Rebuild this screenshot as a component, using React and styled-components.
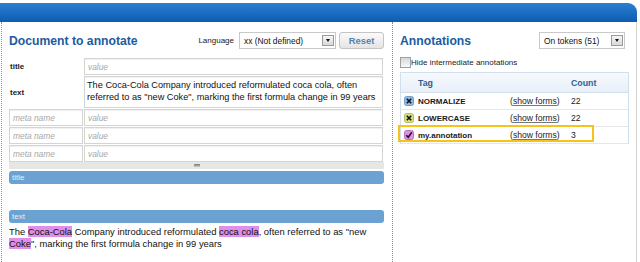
import React from "react";
import styled, { createGlobalStyle } from "styled-components";

const GlobalStyle = createGlobalStyle`
    html, body {
        margin: 0;
        padding: 0;
        background: #fff;
    }
    body {
        font-family: "Liberation Sans", Arial, sans-serif;
        color: #111;
    }
`;

const Page = styled.div`
    width: 637px;
    height: 262px;
    padding-top: 3px;
    box-sizing: border-box;
    overflow: hidden;
`;

const TopBar = styled.div`
    height: 19px;
    border-top-right-radius: 9px;
    background: linear-gradient(#2c7fd1, #0d5db3);
`;

const Body = styled.div`
    display: flex;
    height: 240px;
    margin-left: 1px;
    border-left: 1px dotted #8c8c8c;
    border-right: 1px solid #d3d3d3;
`;

const LeftCol = styled.div`
    box-sizing: border-box;
    width: 391px;
    padding: 9px 8px 0 7px;
    border-right: 1px dotted #8c8c8c;
`;

const RightCol = styled.div`
    flex: 1;
    padding: 9px 7px 0 7px;
`;

const HeaderRow = styled.div`
    display: flex;
    align-items: center;
    height: 19px;
`;

const Heading = styled.h2`
    margin: 0;
    flex: 1;
    font-size: 12.2px;
    font-weight: bold;
    color: #1d5b9f;
`;

const SmallLabel = styled.span`
    font-size: 8px;
    color: #222;
    margin-right: 5px;
`;

const SelectBox = styled.div`
    box-sizing: border-box;
    display: flex;
    align-items: center;
    justify-content: space-between;
    width: ${({w}) => w}px;
    height: 17px;
    padding: 0 1px 0 4px;
    border: 1px solid #c9c9c9;
    background: #fff;
    font-size: 8.4px;
    color: #111;
`;

const SelectArrow = styled.span`
    box-sizing: border-box;
    width: 12px;
    height: 11px;
    border: 1px solid #9a9a9a;
    background: linear-gradient(#f6f6f6, #d9d9d9);
    display: flex;
    align-items: center;
    justify-content: center;
    &::after {
        content: "";
        border-left: 2.5px solid transparent;
        border-right: 2.5px solid transparent;
        border-top: 3px solid #111;
    }
`;

const ResetButton = styled.button`
    box-sizing: border-box;
    width: 45px;
    height: 17px;
    margin-left: 3px;
    padding: 0;
    border: 1px solid #c4c4c4;
    border-radius: 3px;
    background: linear-gradient(#fbfbfb, #e4e4e4);
    font-family: "Liberation Sans", Arial, sans-serif;
    font-size: 9.4px;
    font-weight: bold;
    color: #5581b2;
`;

const FormGrid = styled.div`
    display: grid;
    grid-template-columns: 74px 299px;
    column-gap: 1px;
    row-gap: 1px;
    margin-top: 8px;
`;

const FieldLabel = styled.div`
    display: flex;
    align-items: center;
    padding-left: 1px;
    font-size: 8px;
    font-weight: bold;
    color: #222;
`;

const Field = styled.div`
    box-sizing: border-box;
    height: ${({tall}) => (tall ? 32 : 17)}px;
    padding: ${({tall}) => (tall ? "2px 0 0 2px" : "0 3px")};
    display: flex;
    align-items: ${({tall}) => (tall ? "flex-start" : "center")};
    border: 1px solid #d4d4d4;
    box-shadow: inset 0 1px 1px #f0f0f0;
    font-size: ${({tall}) => (tall ? "9.2px" : "8.4px")};
    line-height: 12px;
    color: ${({placeholder}) => (placeholder ? "#a8a8a8" : "#111")};
    font-style: ${({placeholder}) => (placeholder ? "italic" : "normal")};
`;

const ResizeBar = styled.div`
    height: 7px;
    background: #e6e6e6;
    display: flex;
    align-items: center;
    justify-content: center;
    &::after {
        content: "";
        width: 6px;
        height: 3px;
        background: linear-gradient(#777, #ccc);
    }
`;

const SectionBar = styled.div`
    box-sizing: border-box;
    height: 13px;
    margin-top: ${({gap}) => gap}px;
    padding-left: 3px;
    border-radius: 3px;
    background: #6ca2d1;
    font-size: 8px;
    line-height: 13px;
    color: #e6eef8;
`;

const Preview = styled.p`
    margin: 3px 0 0 0;
    font-size: 9.4px;
    line-height: 12px;
    color: #111;
`;

const Mark = styled.span`
    background: #df8ee9;
`;

const CheckRow = styled.label`
    display: flex;
    align-items: center;
    height: 12px;
    margin-top: 6px;
    font-size: 8px;
    color: #222;
`;

const CheckBox = styled.span`
    box-sizing: border-box;
    width: 11px;
    height: 11px;
    border: 1px solid #a0a0a0;
    background: linear-gradient(#d8d8d8, #f8f8f8);
`;

const Table = styled.div`
    position: relative;
    margin-top: 4px;
    border: 1px solid #d2dfec;
    border-bottom: none;
`;

const Row = styled.div`
    display: grid;
    grid-template-columns: 109px 60px 1fr;
    align-items: center;
    height: ${({head}) => (head ? 19 : 16)}px;
    border-bottom: 1px solid ${({head}) => (head ? "#d2dfec" : "#e6e6e6")};
    background: ${({head}) => (head ? "linear-gradient(#f6f9fd, #e9f0f9)" : "#fff")};
`;

const HeadCell = styled.div`
    padding-left: ${({pad}) => pad}px;
    font-size: 8.8px;
    font-weight: bold;
    color: #2f5f93;
`;

const TagCell = styled.div`
    display: flex;
    align-items: center;
    gap: 4px;
    padding-left: 3px;
    font-size: 8px;
    font-weight: bold;
    color: #1a1a1a;
`;

const FormsCell = styled.div`
    font-size: 8.6px;
    color: #222;
    span {
        text-decoration: underline;
        text-decoration-color: #777;
    }
`;

const CountCell = styled.div`
    padding-left: 1px;
    font-size: 8.6px;
    color: #222;
`;

const Highlight = styled.div`
    position: absolute;
    left: -3px;
    top: 52px;
    width: 196px;
    height: 17px;
    box-sizing: border-box;
    border: 2px solid #f6c31c;
    pointer-events: none;
`;

const Spacer = styled.span`
    width: 4px;
`;

const TagIcon = ({bg, edge, check}) => (
    <svg width="10" height="10" viewBox="0 0 10 10">
        <rect x="0.5" y="0.5" width="9" height="9" rx="2" fill={bg} stroke={edge}/>
        {check ? (
            <path d="M2.3 5.2 L4.2 7.3 L7.8 2.4" fill="none" stroke="#111" strokeWidth="1.6"/>
        ) : (
            <path d="M2.8 2.8 L7.2 7.2 M7.2 2.8 L2.8 7.2" fill="none" stroke="#111" strokeWidth="1.6"/>
        )}
    </svg>
);

const annotations = [
    {name: "NORMALIZE", count: 22, bg: "#8ebbe7", edge: "#6f9fcf"},
    {name: "LOWERCASE", count: 22, bg: "#d5e07c", edge: "#b5c060"},
    {name: "my.annotation", count: 3, bg: "#dc8fe6", edge: "#c070cc", check: true},
];

export default function App() {
    return (
        <Page>
            <GlobalStyle/>
            <TopBar/>
            <Body>
                <LeftCol>
                    <HeaderRow>
                        <Heading>Document to annotate</Heading>
                        <SmallLabel>Language</SmallLabel>
                        <SelectBox w={97}>
                            xx (Not defined)
                            <SelectArrow/>
                        </SelectBox>
                        <ResetButton>Reset</ResetButton>
                    </HeaderRow>
                    <FormGrid>
                        <FieldLabel>title</FieldLabel>
                        <Field placeholder>value</Field>
                        <FieldLabel>text</FieldLabel>
                        <Field tall>
                            The Coca-Cola Company introduced reformulated coca cola, often referred to as "new Coke", marking the first formula change in 99 years
                        </Field>
                        {[0, 1, 2].map((i) => (
                            <React.Fragment key={i}>
                                <Field placeholder>meta name</Field>
                                <Field placeholder>value</Field>
                            </React.Fragment>
                        ))}
                    </FormGrid>
                    <ResizeBar/>
                    <SectionBar gap={2}>title</SectionBar>
                    <SectionBar gap={26}>text</SectionBar>
                    <Preview>
                        The <Mark>Coca-Cola</Mark> Company introduced reformulated <Mark>coca cola</Mark>, often referred to as "new <Mark>Coke</Mark>", marking the first formula change in 99 years
                    </Preview>
                </LeftCol>
                <RightCol>
                    <HeaderRow>
                        <Heading>Annotations</Heading>
                        <SelectBox w={86}>
                            On tokens (51)
                            <SelectArrow/>
                        </SelectBox>
                        <Spacer/>
                    </HeaderRow>
                    <CheckRow>
                        <CheckBox/>
                        Hide intermediate annotations
                    </CheckRow>
                    <Table>
                        <Row head>
                            <HeadCell pad={17}>Tag</HeadCell>
                            <div/>
                            <HeadCell pad={1}>Count</HeadCell>
                        </Row>
                        {annotations.map((a) => (
                            <Row key={a.name}>
                                <TagCell>
                                    <TagIcon bg={a.bg} edge={a.edge} check={a.check}/>
                                    {a.name}
                                </TagCell>
                                <FormsCell>(<span>show forms</span>)</FormsCell>
                                <CountCell>{a.count}</CountCell>
                            </Row>
                        ))}
                        <Highlight/>
                    </Table>
                </RightCol>
            </Body>
        </Page>
    );
}
